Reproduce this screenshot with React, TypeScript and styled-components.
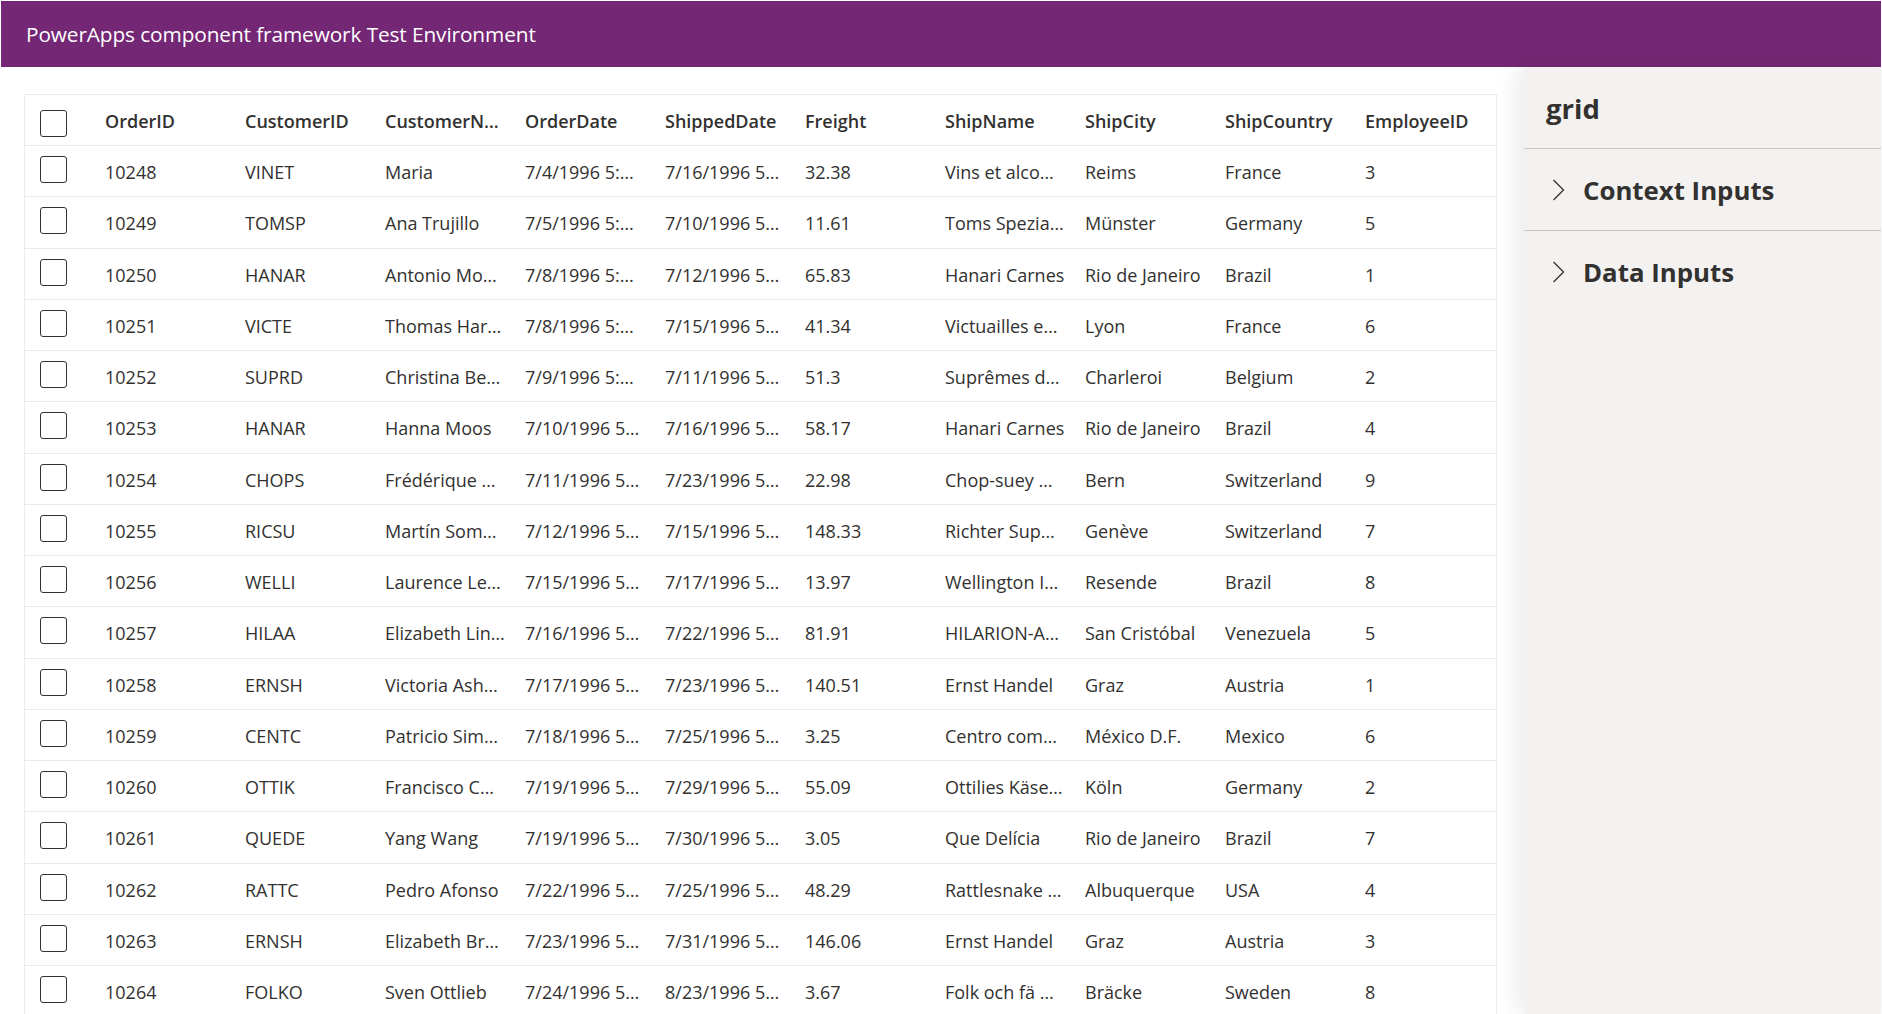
import React from "react";
import styled, { createGlobalStyle } from "styled-components";

const GlobalStyle = createGlobalStyle`
  html, body {
    margin: 0;
    padding: 0;
    height: 100%;
    overflow: hidden;
    background: #ffffff;
    font-family: "Open Sans", "Noto Sans", Arial, sans-serif;
    color: #323130;
  }
  * {
    box-sizing: border-box;
  }
`;

const Page = styled.div`
  height: 100vh;
  padding: 1px 1px 0 1px;
  display: flex;
  flex-direction: column;
`;

const TopBar = styled.header`
  height: 66px;
  flex-shrink: 0;
  background: #742774;
  color: #ffffff;
  display: flex;
  align-items: center;
  padding-left: 25px;
  font-size: 20.8px;
  letter-spacing: -0.1px;
`;

const Main = styled.div`
  flex: 1;
  min-height: 0;
  display: flex;
`;

const Content = styled.main`
  flex: 1;
  min-width: 0;
  padding: 27px 27px 0 23px;
  overflow: hidden;
`;

const GridBox = styled.div`
  border: 1px solid #edebe9;
  border-bottom: none;
  overflow: hidden;
`;

// check column, nine fixed columns, and the last one takes what is left
const Row = styled.div<{ $header?: boolean }>`
  display: grid;
  grid-template-columns: 80px repeat(9, 140px) 1fr;
  height: ${(p) => (p.$header ? "51px" : "51.25px")};
  align-items: center;
  border-bottom: 1px solid #edebe9;
  font-size: 18px;
  font-weight: ${(p) => (p.$header ? 600 : 400)};
  color: #323130;
`;

const CheckCell = styled.div<{ $header?: boolean }>`
  display: flex;
  align-items: center;
  padding-left: 15px;
  margin-top: ${(p) => (p.$header ? "6px" : "-3px")};
`;

const CheckBox = styled.span`
  width: 27px;
  height: 27px;
  border: 1px solid #323130;
  border-radius: 3px;
  background: #ffffff;
`;

const Cell = styled.div`
  padding-right: 12px;
  white-space: nowrap;
  overflow: hidden;
  text-overflow: ellipsis;
  line-height: 26px;
  margin-top: 2px;
`;

const Panel = styled.aside`
  width: 357px;
  flex-shrink: 0;
  background: #f3f2f1;
  box-shadow: -6px 0 22px rgba(0, 0, 0, 0.09);
`;

const PanelTitle = styled.div`
  height: 82px;
  border-bottom: 1px solid #c8c6c4;
  display: flex;
  align-items: center;
  padding: 2px 0 0 22px;
  font-size: 27.5px;
  font-weight: 700;
  color: #323130;
`;

const Section = styled.div`
  height: 82px;
  border-bottom: 1px solid #c8c6c4;
  display: flex;
  align-items: center;
  padding-left: 28px;
  gap: 18px;
  font-size: 25.8px;
  font-weight: 700;
  color: #323130;

  &:last-child {
    border-bottom: none;
  }
`;

const Chevron = () => (
  <svg width="13" height="22" viewBox="0 0 13 22" fill="none">
    <path d="M1.5 1 L11.5 11 L1.5 21" stroke="#323130" strokeWidth="1.3" />
  </svg>
);

const columns = [
  "OrderID",
  "CustomerID",
  "CustomerN…",
  "OrderDate",
  "ShippedDate",
  "Freight",
  "ShipName",
  "ShipCity",
  "ShipCountry",
  "EmployeeID",
];

const rows: string[][] = [
  ["10248", "VINET", "Maria", "7/4/1996 5:…", "7/16/1996 5…", "32.38", "Vins et alco…", "Reims", "France", "3"],
  ["10249", "TOMSP", "Ana Trujillo", "7/5/1996 5:…", "7/10/1996 5…", "11.61", "Toms Spezia…", "Münster", "Germany", "5"],
  ["10250", "HANAR", "Antonio Mo…", "7/8/1996 5:…", "7/12/1996 5…", "65.83", "Hanari Carnes", "Rio de Janeiro", "Brazil", "1"],
  ["10251", "VICTE", "Thomas Har…", "7/8/1996 5:…", "7/15/1996 5…", "41.34", "Victuailles e…", "Lyon", "France", "6"],
  ["10252", "SUPRD", "Christina Be…", "7/9/1996 5:…", "7/11/1996 5…", "51.3", "Suprêmes d…", "Charleroi", "Belgium", "2"],
  ["10253", "HANAR", "Hanna Moos", "7/10/1996 5…", "7/16/1996 5…", "58.17", "Hanari Carnes", "Rio de Janeiro", "Brazil", "4"],
  ["10254", "CHOPS", "Frédérique …", "7/11/1996 5…", "7/23/1996 5…", "22.98", "Chop-suey …", "Bern", "Switzerland", "9"],
  ["10255", "RICSU", "Martín Som…", "7/12/1996 5…", "7/15/1996 5…", "148.33", "Richter Sup…", "Genève", "Switzerland", "7"],
  ["10256", "WELLI", "Laurence Le…", "7/15/1996 5…", "7/17/1996 5…", "13.97", "Wellington I…", "Resende", "Brazil", "8"],
  ["10257", "HILAA", "Elizabeth Lin…", "7/16/1996 5…", "7/22/1996 5…", "81.91", "HILARION-A…", "San Cristóbal", "Venezuela", "5"],
  ["10258", "ERNSH", "Victoria Ash…", "7/17/1996 5…", "7/23/1996 5…", "140.51", "Ernst Handel", "Graz", "Austria", "1"],
  ["10259", "CENTC", "Patricio Sim…", "7/18/1996 5…", "7/25/1996 5…", "3.25", "Centro com…", "México D.F.", "Mexico", "6"],
  ["10260", "OTTIK", "Francisco C…", "7/19/1996 5…", "7/29/1996 5…", "55.09", "Ottilies Käse…", "Köln", "Germany", "2"],
  ["10261", "QUEDE", "Yang Wang", "7/19/1996 5…", "7/30/1996 5…", "3.05", "Que Delícia", "Rio de Janeiro", "Brazil", "7"],
  ["10262", "RATTC", "Pedro Afonso", "7/22/1996 5…", "7/25/1996 5…", "48.29", "Rattlesnake …", "Albuquerque", "USA", "4"],
  ["10263", "ERNSH", "Elizabeth Br…", "7/23/1996 5…", "7/31/1996 5…", "146.06", "Ernst Handel", "Graz", "Austria", "3"],
  ["10264", "FOLKO", "Sven Ottlieb", "7/24/1996 5…", "8/23/1996 5…", "3.67", "Folk och fä …", "Bräcke", "Sweden", "8"],
];

export default function App() {
  return (
    <>
      <GlobalStyle />
      <Page>
        <TopBar>PowerApps component framework Test Environment</TopBar>
        <Main>
          <Content>
            <GridBox>
              <Row $header>
                <CheckCell $header>
                  <CheckBox />
                </CheckCell>
                {columns.map((c) => (
                  <Cell key={c}>{c}</Cell>
                ))}
              </Row>
              {rows.map((r) => (
                <Row key={r[0]}>
                  <CheckCell>
                    <CheckBox />
                  </CheckCell>
                  {r.map((v, i) => (
                    <Cell key={i}>{v}</Cell>
                  ))}
                </Row>
              ))}
            </GridBox>
          </Content>
          <Panel>
            <PanelTitle>grid</PanelTitle>
            <Section>
              <Chevron />
              Context Inputs
            </Section>
            <Section>
              <Chevron />
              Data Inputs
            </Section>
          </Panel>
        </Main>
      </Page>
    </>
  );
}
